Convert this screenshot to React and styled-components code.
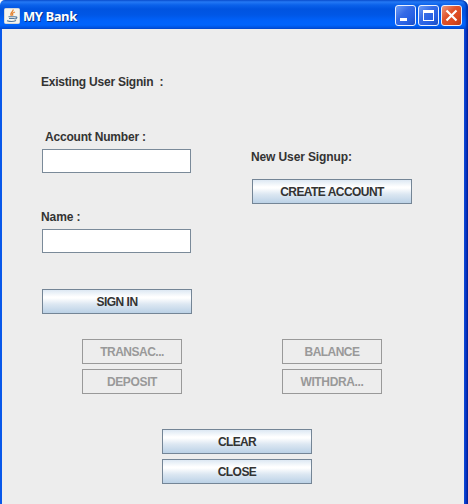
import React from "react";
import styled, { createGlobalStyle } from "styled-components";

const GlobalStyle = createGlobalStyle`
  * { box-sizing: border-box; }
  body { margin: 0; overflow: hidden; background: #fff; }
`;

const Window = styled.main`
  width: 468px;
  height: 504px;
  display: flex;
  flex-direction: column;
  font: bold 12px/14px "Liberation Sans", Arial, sans-serif;
  color: #333;
`;

const TitleBar = styled.header`
  flex: 0 0 29px;
  display: flex;
  align-items: center;
  padding: 2px 6px 0 4px;
  border-radius: 5px 7px 0 0;
  background: linear-gradient(
    #0a50d0 0, #2478f4 2px, #0b62ea 5px, #0054e0 9px,
    #0057e6 15px, #0062fb 21px, #0064fc 25px, #0050dc 28px, #0048cc 29px
  );
  box-shadow: inset -3px 0 2px -1px #0030a8;
`;

const Title = styled.h1`
  flex: 1;
  margin: 1px 0 0 3px;
  font: bold 13px/18px "Open Sans", "Noto Sans", sans-serif;
  letter-spacing: -0.45px;
  color: #fff;
  text-shadow: 1px 1px 0 #062f86;
`;

const Controls = styled.div`
  display: flex;
  gap: 2px;
`;

const ControlButton = styled.button`
  width: 21px;
  height: 21px;
  padding: 0;
  border: 1px solid #e9f0ff;
  border-radius: 3px;
  background: ${(p) =>
    p.$close
      ? "linear-gradient(135deg, #ec9a80, #e0532c 40%, #dc4a20 70%, #b83a18)"
      : "linear-gradient(135deg, #6c9cf6, #356be6 40%, #2660e4 70%, #1b4cc0)"};
  svg { display: block; }
`;

const Frame = styled.div`
  flex: 1;
  display: flex;
  flex-direction: column;
  background: #ededed;
  border-left: 2px solid #0855e8;
  border-right: 4px solid;
  border-image: linear-gradient(90deg, #0858ea 0, #0858ea 2px, #0c4cd8 464px, #0634c4 466px, #001c92 468px) 0 4 0 2;
`;

const Columns = styled.section`
  display: grid;
  grid-template-columns: 210px 160px;
  padding-left: 40px;
  height: 310px;
`;

const Column = styled.div`
  display: flex;
  flex-direction: column;
  align-items: flex-start;
  padding-top: ${(p) => p.$top}px;
`;

const Caption = styled.label`
  height: 14px;
  margin: 0 0 ${(p) => p.$after}px ${(p) => p.$indent ?? -1}px;
  white-space: pre;
  letter-spacing: ${(p) => p.$tracking ?? 0}px;
`;

const Field = styled.input`
  width: 149px;
  height: 24px;
  margin-bottom: ${(p) => p.$after}px;
  padding: 2px;
  border: 1px solid #7a8a99;
  outline: 0;
  background: #fff;
  font: inherit;
`;

const Button = styled.button`
  width: ${(p) => p.$width}px;
  height: 25px;
  padding: 1px 0 0;
  border: 1px solid #748596;
  background: linear-gradient(#dde8f3 0, #fff 30%, #fff 35%, #dce7f2 62%, #bbd1e6 100%);
  font: inherit;
  line-height: 22px;
  color: #333;
  letter-spacing: ${(p) => p.$tracking ?? 0}px;
  &:disabled {
    border-color: #999;
    background: #ededed;
    color: #999;
  }
`;

const Actions = styled.section`
  display: grid;
  grid-template-columns: 100px 100px;
  column-gap: 100px;
  row-gap: 5px;
  margin-left: 80px;
`;

const Footer = styled.footer`
  display: flex;
  flex-direction: column;
  gap: 5px;
  margin: 35px 0 0 160px;
`;

const JavaIcon = () => (
  <svg width="16" height="16" viewBox="0 0 16 16" fill="none">
    <rect x=".5" y=".5" width="15" height="15" rx="1" fill="#f4f4ee" stroke="#d5d7d9" />
    <path d="M9 1.5C10 4 5 4.5 7.4 8M11 4C8 5 8 6 9 7.6" stroke="#e48330" strokeWidth="1.3" />
    <path d="M4.5 8.8h6.5M5 10.5h5.5M3 12.7c3 1 7 .8 9-.2M11 9c3-.7 2 2-.5 2" stroke="#55799c" strokeWidth="1.1" />
  </svg>
);

export default function App() {
  return (
    <>
      <GlobalStyle />
      <Window>
        <TitleBar>
          <JavaIcon />
          <Title>MY Bank</Title>
          <Controls>
            <ControlButton aria-label="Minimize">
              <svg width="19" height="19"><rect x="4" y="12" width="7" height="3" fill="#fff" /></svg>
            </ControlButton>
            <ControlButton aria-label="Maximize">
              <svg width="19" height="19">
                <path d="M4 4h11v11H4zM5 7v7h9V7z" fill="#fff" fillRule="evenodd" />
              </svg>
            </ControlButton>
            <ControlButton $close aria-label="Close window">
              <svg width="19" height="19"><path d="M4.5 4.5l10 10M14.5 4.5l-10 10" stroke="#fff" strokeWidth="2.2" /></svg>
            </ControlButton>
          </Controls>
        </TitleBar>
        <Frame>
          <Columns>
            <Column $top={46}>
              <Caption $after={41} $tracking={-0.22}>{"Existing User Signin  :"}</Caption>
              <Caption $after={5} $indent={3} $tracking={-0.2}>Account Number :</Caption>
              <Field $after={37} aria-label="Account Number" />
              <Caption $after={5} $tracking={-0.1}>Name :</Caption>
              <Field $after={36} aria-label="Name" />
              <Button $width={150} $tracking={-0.5}>SIGN IN</Button>
            </Column>
            <Column $top={121}>
              <Caption $after={15} $tracking={-0.12}>New User Signup:</Caption>
              <Button $width={160} $tracking={-0.55}>CREATE ACCOUNT</Button>
            </Column>
          </Columns>
          <Actions>
            <Button $width={100} $tracking={-0.5} disabled>TRANSAC...</Button>
            <Button $width={100} $tracking={-0.55} disabled>BALANCE</Button>
            <Button $width={100} $tracking={-0.35} disabled>DEPOSIT</Button>
            <Button $width={100} $tracking={-0.35} disabled>WITHDRA...</Button>
          </Actions>
          <Footer>
            <Button $width={150} $tracking={-0.65}>CLEAR</Button>
            <Button $width={150} $tracking={-0.55}>CLOSE</Button>
          </Footer>
        </Frame>
      </Window>
    </>
  );
}
